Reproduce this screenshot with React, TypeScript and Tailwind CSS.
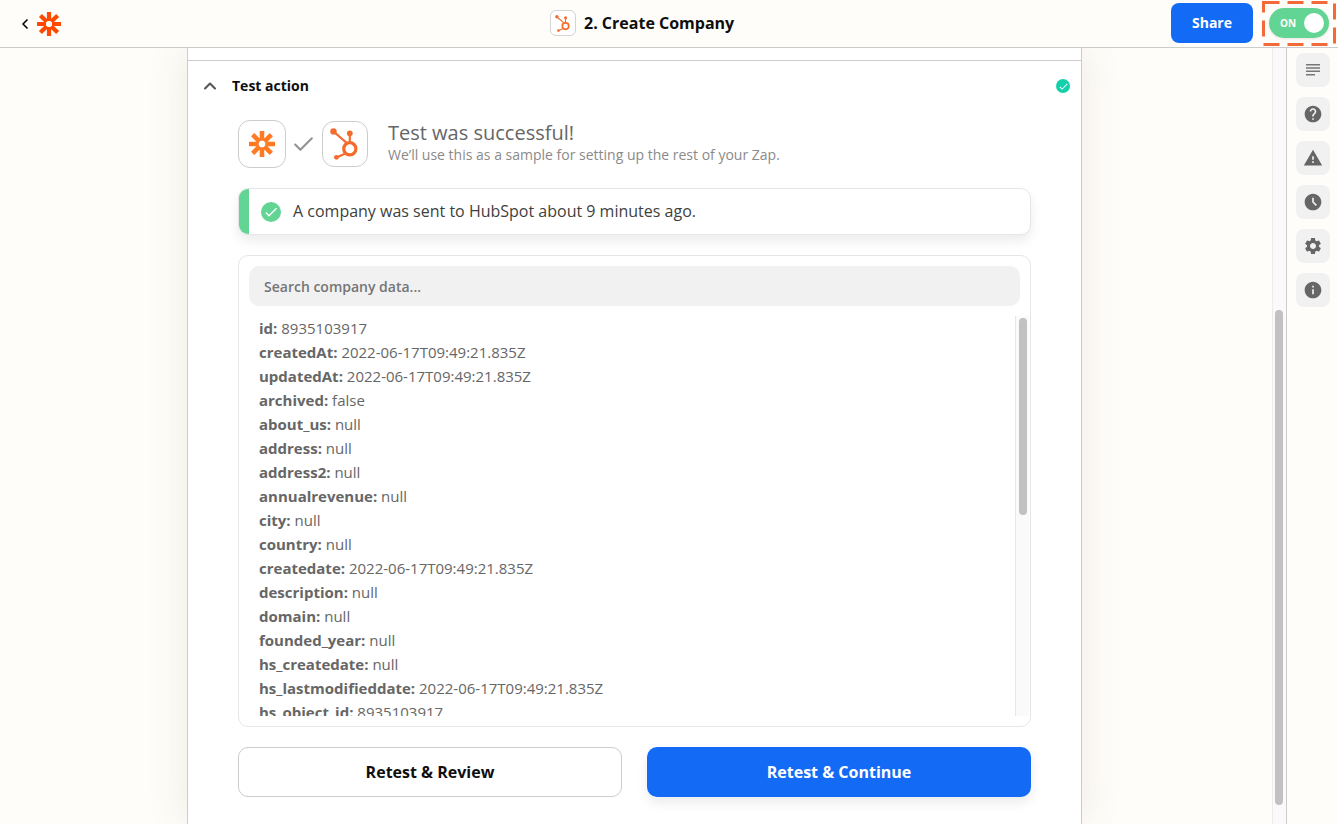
import React from 'react';
import { ChevronLeft, ChevronUp, Check } from 'lucide-react';
import { MdHelp, MdWarning, MdAccessTimeFilled, MdSettings, MdInfo, MdCheck } from 'react-icons/md';

const rows: [string, string][] = [
  ['id', '8935103917'],
  ['createdAt', '2022-06-17T09:49:21.835Z'],
  ['updatedAt', '2022-06-17T09:49:21.835Z'],
  ['archived', 'false'],
  ['about_us', 'null'],
  ['address', 'null'],
  ['address2', 'null'],
  ['annualrevenue', 'null'],
  ['city', 'null'],
  ['country', 'null'],
  ['createdate', '2022-06-17T09:49:21.835Z'],
  ['description', 'null'],
  ['domain', 'null'],
  ['founded_year', 'null'],
  ['hs_createdate', 'null'],
  ['hs_lastmodifieddate', '2022-06-17T09:49:21.835Z'],
  ['hs_object_id', '8935103917'],
];

const ZapierMark = ({ size, color }: { size: number; color: string }) => (
  <svg width={size} height={size} viewBox="0 0 24 24" fill="none">
    <g stroke={color} strokeWidth="4.2">
      <path d="M12 0v9M12 15v9M0 12h9M15 12h9M3.400 3.400l6.400 6.400M14.200 14.200l6.400 6.400M20.600 3.400l-6.400 6.400M9.800 14.200l-6.400 6.400" />
    </g>
  </svg>
);

const HubspotMark = ({ width, height }: { width: number; height: number }) => (
  <svg width={width} height={height} viewBox="0 0 28 30" fill="none">
    <circle cx="18.500" cy="19.500" r="5.700" stroke="#f46b2c" strokeWidth="3" />
    <path d="M3.500 3.500L15 13.500M18.500 6v8M14.500 24L6.500 27.500" stroke="#f46b2c" strokeWidth="2" />
    <circle cx="3.200" cy="3.200" r="3" fill="#f46b2c" />
    <circle cx="18.500" cy="5" r="2.700" fill="#f46b2c" />
    <circle cx="6" cy="27.500" r="2.300" fill="#f46b2c" />
  </svg>
);

const SideButton = ({ children }: { children: React.ReactNode }) => (
  <div className="flex h-[34px] w-[34px] items-center justify-center rounded-lg bg-[#f1f1f1] text-[#666666]">
    {children}
  </div>
);

export default function App() {
  return (
    <div className="flex h-[824px] w-[1338px] flex-col overflow-hidden bg-[#fffdf9] font-['Open_Sans',sans-serif] text-[#403f3e]">
      {/* top bar */}
      <header className="relative z-10 flex h-[48px] items-center justify-between border-b border-[#cccccc] bg-[#fffdf9]">
        <div className="flex items-center pl-[17px]">
          <ChevronLeft size={16} strokeWidth={2.5} className="text-black" />
          <div className="ml-[4px]">
            <ZapierMark size={24} color="#ff4a00" />
          </div>
        </div>
        <div className="absolute left-[550px] top-[10px] flex items-center">
          <div className="flex h-[26px] w-[26px] items-center justify-center rounded-md border border-[#d4d4d4] bg-white">
            <HubspotMark width={16} height={17} />
          </div>
          <span className="ml-[8px] text-base font-bold text-[#0f0f0f]">2. Create Company</span>
        </div>
        <div className="relative mb-[1px] flex items-center pr-[9px]">
          <button className="mr-[16px] h-[40px] w-[82px] rounded-lg bg-[#136bf5] text-sm font-bold text-white">Share</button>
          <div className="relative flex h-[30px] w-[60px] items-center justify-between rounded-full bg-[#62d493] pl-[11px] pr-[5px] shadow-[0_1px_3px_rgba(0,0,0,0.1)]">
            <span className="text-[10px] font-bold text-white">ON</span>
            <span className="h-[20px] w-[20px] rounded-full bg-white" />
          </div>
          <svg className="absolute left-[91px] top-[-2px]" width="74" height="45" fill="none">
            <rect x="1.500" y="1.500" width="71" height="42" stroke="#f26a3a" strokeWidth="3" strokeDasharray="16 8" />
          </svg>
        </div>
      </header>

      <div className="flex min-h-0 flex-1">
        {/* page area */}
        <main className="flex min-w-0 flex-1 pl-[187px] pr-[190px]">
          <section className="h-full w-full border-x border-[#cccccc] bg-white shadow-[0_0_40px_rgba(80,70,50,0.1)]">
            <div className="h-[13px] border-b border-[#cccccc]" />
            <div className="flex h-[50px] items-center justify-between pl-[12px] pr-[11px]">
              <div className="flex items-center">
                <ChevronUp size={20} strokeWidth={2.5} className="text-[#555555]" />
                <span className="ml-[12px] text-sm font-bold text-[#0f0f0f]">Test action</span>
              </div>
              <div className="flex h-[14px] w-[14px] items-center justify-center rounded-full bg-[#13d0ab] text-white">
                <MdCheck size={11} />
              </div>
            </div>

            <div className="px-[50px]">
              <div className="mt-[9px] flex items-center">
                <div className="flex h-[48px] w-[48px] items-center justify-center rounded-[12px] border border-[#cccccc] bg-white">
                  <ZapierMark size={26} color="#ff7a21" />
                </div>
                <Check size={25} strokeWidth={2} className="ml-[5px] mr-[6px] text-[#939393]" />
                <div className="flex h-[46px] w-[46px] items-center justify-center rounded-[12px] border border-[#cccccc] bg-white">
                  <HubspotMark width={30} height={32} />
                </div>
                <div className="ml-[20px] self-start">
                  <div className="text-xl leading-[26px] text-[#666666]">Test was successful!</div>
                  <div className="mt-[1px] text-sm leading-[16px] text-[#8a8a8a]">We’ll use this as a sample for setting up the rest of your Zap.</div>
                </div>
              </div>

              <div className="mt-[20px] flex h-[47px] overflow-hidden rounded-[10px] border border-[#e6e6e6] bg-white shadow-[0_6px_12px_rgba(0,0,0,0.08)]">
                <div className="w-[10px] bg-[#62d493]" />
                <div className="flex items-center pl-[12px]">
                  <div className="flex h-[20px] w-[20px] items-center justify-center rounded-full bg-[#62d493] text-white">
                    <MdCheck size={16} />
                  </div>
                  <span className="mb-[2px] ml-[12px] text-base text-[#403f3e]">A company was sent to HubSpot about 9 minutes ago.</span>
                </div>
              </div>

              <div className="mt-[20px] h-[472px] rounded-[10px] border border-[#e6e6e6] bg-white p-[10px]">
                <div className="flex h-[40px] items-center rounded-[10px] bg-[#f1f1f1] pl-[15px] pt-[2px] text-sm font-semibold text-[#757575]">
                  Search company data...
                </div>
                <div className="mr-[-9px] mt-[10px] flex h-[400px]">
                  <div className="min-w-0 flex-1 overflow-hidden pl-[10px]">
                    {rows.map(([key, value]) => (
                      <div key={key} className="text-[15px] leading-[24px] text-[#666666]">
                        <span className="font-bold">{key}:</span> {value}
                      </div>
                    ))}
                  </div>
                  <div className="w-[14px] border-l border-[#e6e6e6] bg-[#fafafa] pl-[3px] pt-[2px]">
                    <div className="h-[197px] w-[8px] rounded-full bg-[#c1c1c1]" />
                  </div>
                </div>
              </div>

              <div className="mt-[20px] flex justify-between">
                <button className="h-[50px] w-[384px] rounded-[10px] border border-[#cccccc] bg-white text-base font-bold text-[#0f0f0f]">
                  Retest &amp; Review
                </button>
                <button className="h-[50px] w-[384px] rounded-[10px] bg-[#136bf5] text-base font-bold text-white shadow-[0_6px_12px_rgba(0,0,0,0.08)]">
                  Retest &amp; Continue
                </button>
              </div>
            </div>
          </section>
        </main>

        {/* page scrollbar */}
        <div className="w-[14px] border-l border-[#ececec] bg-[#fafafa] pl-[2px] pt-[262px]">
          <div className="h-[495px] w-[8px] rounded-full bg-[#c1c1c1]" />
        </div>

        {/* right rail */}
        <aside className="flex w-[52px] flex-col gap-[10px] border-l border-[#cccccc] bg-[#fffdf9] pl-[9px] pt-[5px]">
          <SideButton>
            <svg width="14" height="12" viewBox="0 0 14 12" fill="#777777">
              <path d="M0 0h14v1.500H0zM0 3.300h14v1.500H0zM0 6.600h14v1.500H0zM0 9.900h9v1.500H0z" />
            </svg>
          </SideButton>
          <SideButton><MdHelp size={20} /></SideButton>
          <SideButton><MdWarning size={20} /></SideButton>
          <SideButton><MdAccessTimeFilled size={20} /></SideButton>
          <SideButton><MdSettings size={20} /></SideButton>
          <SideButton><MdInfo size={20} /></SideButton>
        </aside>
      </div>
    </div>
  );
}
